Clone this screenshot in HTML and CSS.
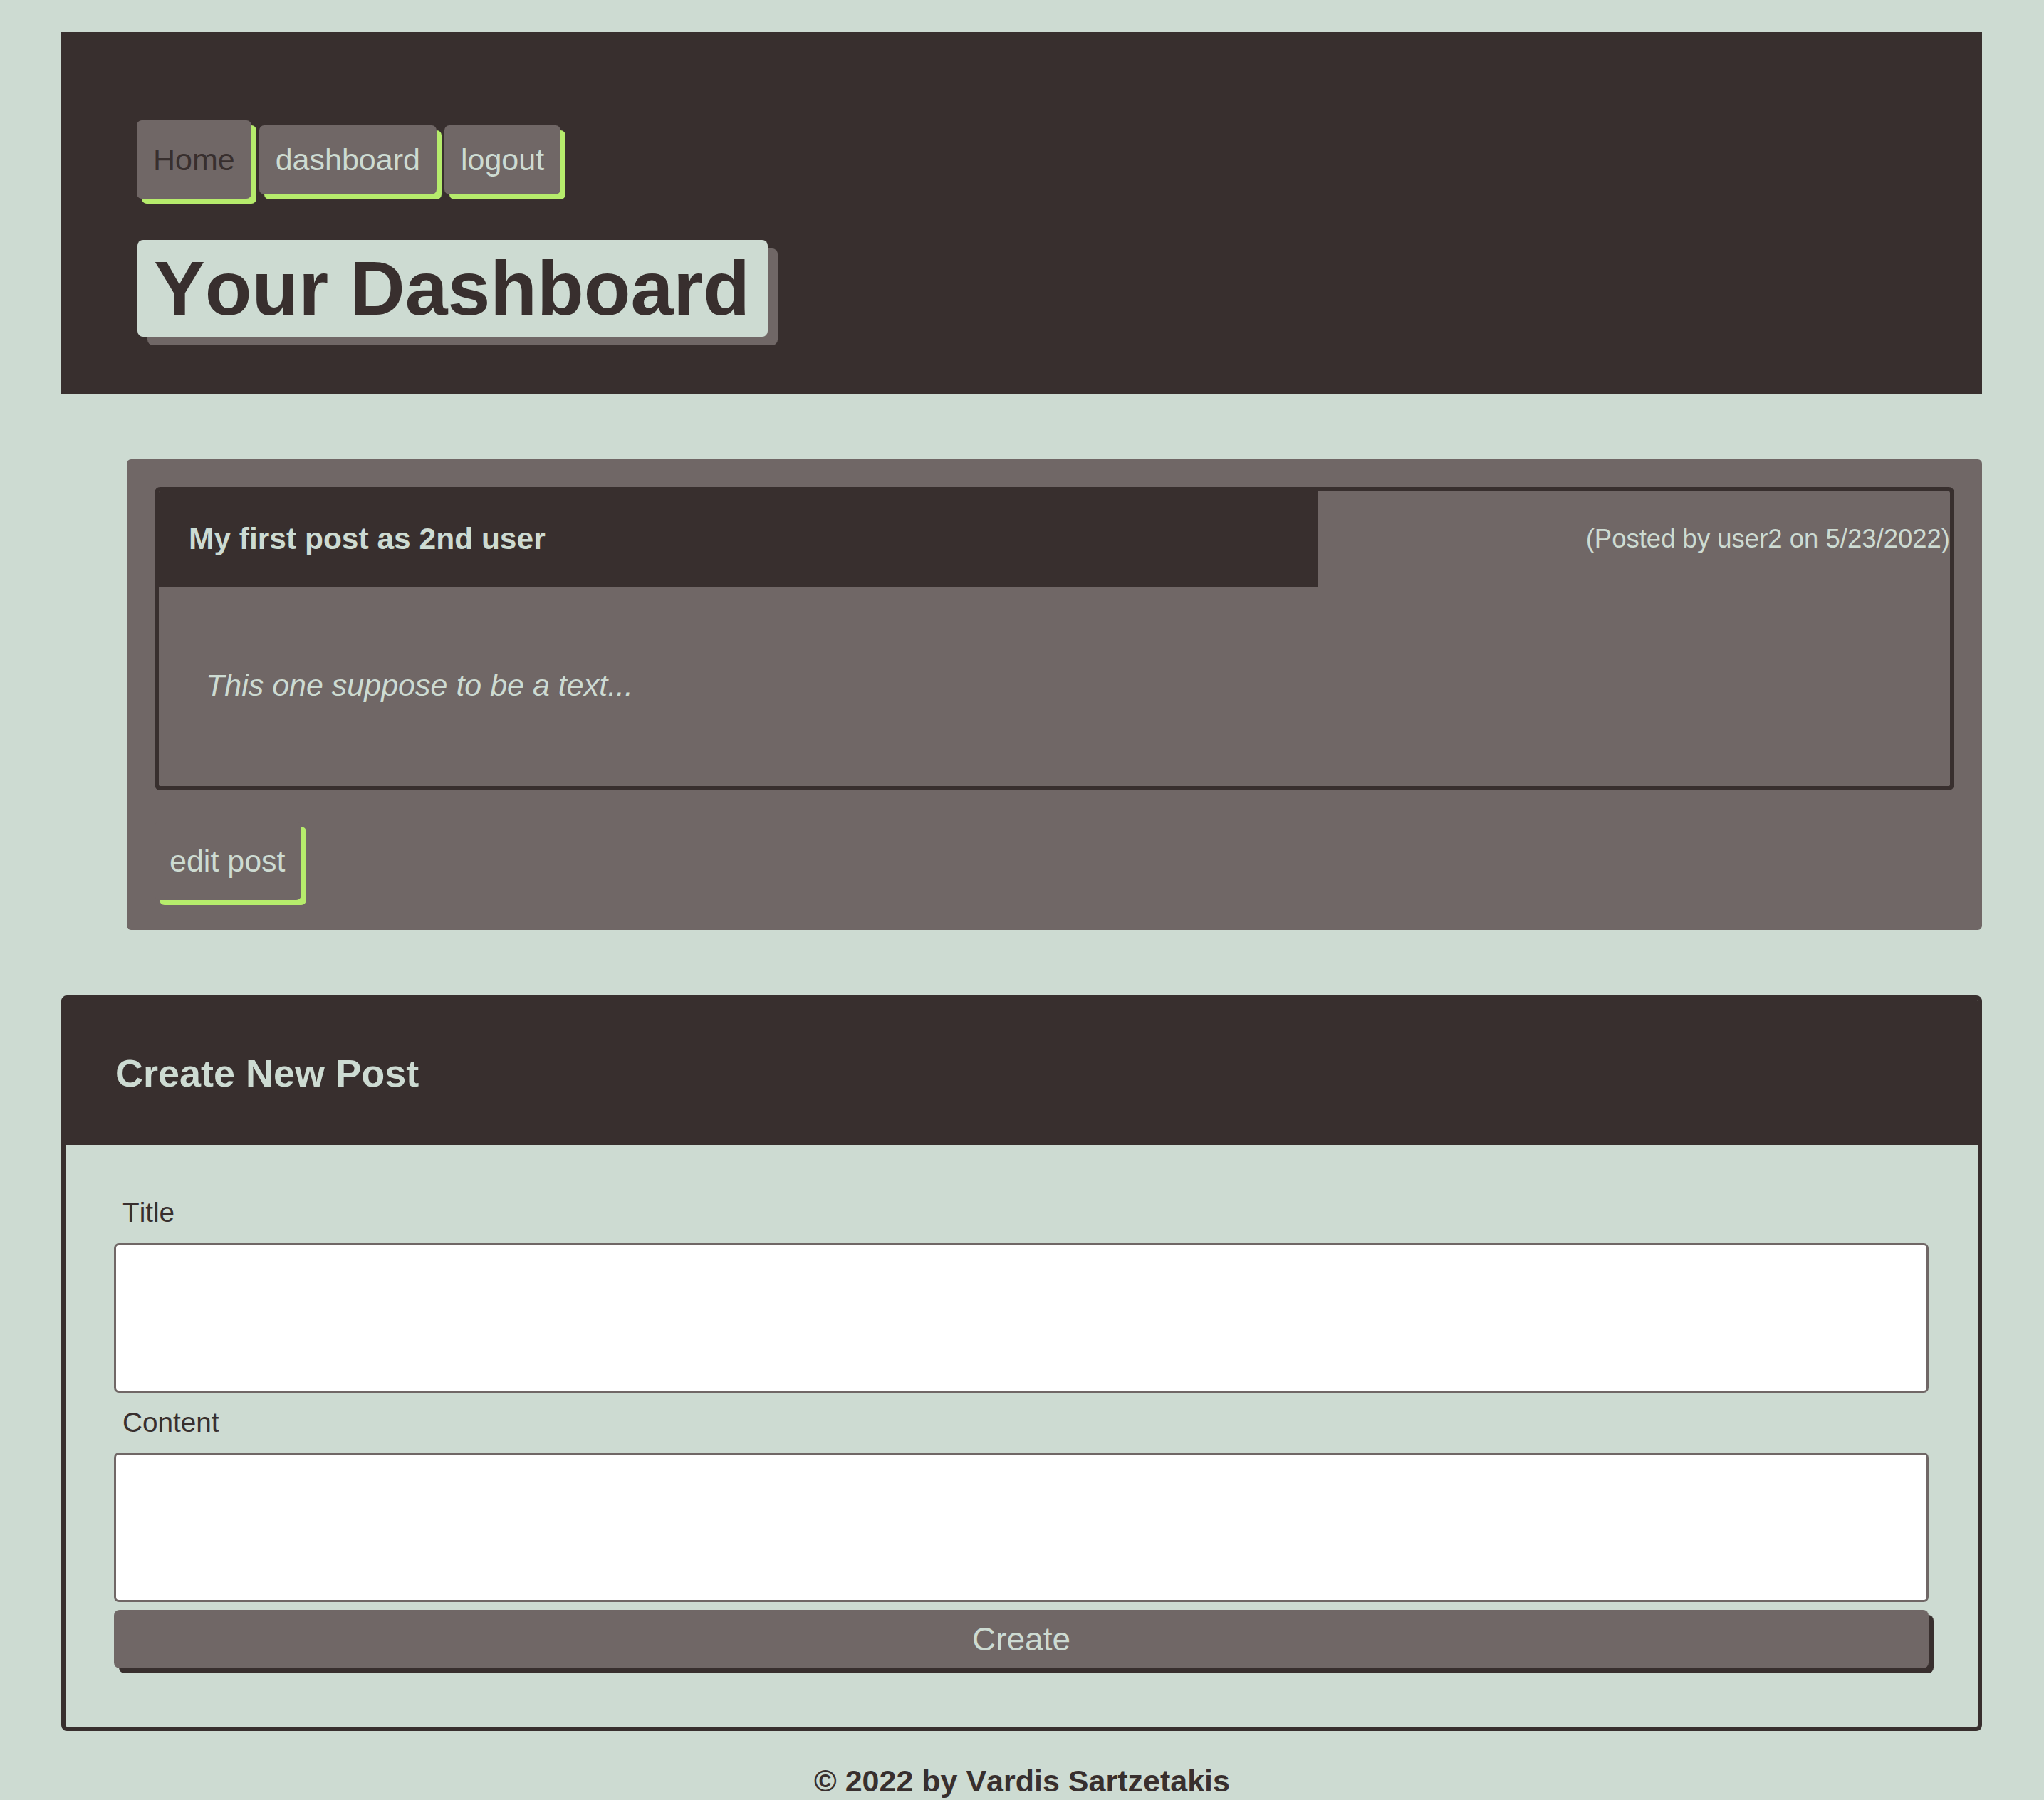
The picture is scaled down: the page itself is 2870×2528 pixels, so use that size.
FILE: index.html
```html
<!DOCTYPE html>
<html lang="en">
<head>
<meta charset="utf-8">
<title>Your Dashboard</title>
<link rel="stylesheet" href="styles.css">
</head>
<body>
<header class="site-header">
  <nav class="nav">
    <a class="nav-link nav-link--active" href="#">Home</a>
    <a class="nav-link" href="#">dashboard</a>
    <a class="nav-link" href="#">logout</a>
  </nav>
  <h1 class="page-title">Your Dashboard</h1>
</header>
<main>
  <section class="posts">
    <article class="post-card">
      <div class="post-head">
        <h2 class="post-title">My first post as 2nd user</h2>
        <span class="post-meta">(Posted by user2 on 5/23/2022)</span>
      </div>
      <p class="post-body">This one suppose to be a text...</p>
    </article>
    <a class="btn-edit" href="#">edit post</a>
  </section>
  <form class="new-post">
    <h2 class="new-post-head">Create New Post</h2>
    <div class="new-post-body">
      <label class="field-label" for="title">Title</label>
      <input class="field-input" id="title" type="text">
      <label class="field-label field-label--gap" for="content">Content</label>
      <textarea class="field-input field-area" id="content"></textarea>
      <button class="btn-create" type="button">Create</button>
    </div>
  </form>
</main>
<footer class="site-footer">© 2022 by Vardis Sartzetakis</footer>
</body>
</html>
```
FILE: styles.css
```css
html, body {
  margin: 0;
  padding: 0;
  background: #cddbd2;
}
body {
  font-family: "Liberation Sans", Arial, sans-serif;
  font-size: 43px;
  line-height: normal;
  font-kerning: none;
  color: #382f2e;
}

.site-header {
  margin: 45px 87px 0 86px;
  background: #382f2e;
  padding: 124px 106px 81px;
  display: flex;
  flex-direction: column;
  align-items: flex-start;
}
.nav {
  display: flex;
  align-items: center;
  gap: 11px;
}
.nav-link {
  display: block;
  background: #706766;
  color: #cddbd2;
  text-decoration: none;
  padding: 24px 23px;
  border-radius: 7px;
  box-shadow: 7px 7px 0 #b6ec6c;
}
.nav-link--active {
  color: #382f2e;
  padding: 30.5px 23px;
}
.page-title {
  margin: 58px 0 0 1px;
  font-size: 107.6px;
  font-weight: bold;
  line-height: normal;
  background: #cddbd2;
  color: #382f2e;
  padding: 6px 25px 6px 23px;
  border-radius: 8px;
  box-shadow: 14px 12px 0 #706766;
}

.posts {
  margin: 91px 87px 0 178px;
  background: #706766;
  border-radius: 6px;
  padding: 39px 39px 42px;
  display: flex;
  flex-direction: column;
  align-items: flex-start;
}
.post-card {
  align-self: stretch;
  border: 6px solid #382f2e;
  border-radius: 8px;
  overflow: hidden;
}
.post-head {
  display: flex;
  align-items: center;
  justify-content: space-between;
}
.post-title {
  box-sizing: border-box;
  width: 64.7%;
  margin: 0;
  padding: 43px 43px 43px 42px;
  background: #382f2e;
  color: #cddbd2;
  font-size: 42.5px;
  font-weight: bold;
  line-height: normal;
}
.post-meta {
  font-size: 36.5px;
  color: #cddbd2;
}
.post-body {
  margin: 0;
  padding: 114px 66px 117px;
  font-style: italic;
  color: #cddbd2;
}
.btn-edit {
  margin-top: 44px;
  display: block;
  background: #706766;
  color: #cddbd2;
  text-decoration: none;
  padding: 30.5px 22px 30.5px 21px;
  border-radius: 7px;
  box-shadow: 7px 7px 0 #b6ec6c;
}

.new-post {
  margin: 92px 87px 0 86px;
  border: 6px solid #382f2e;
  border-radius: 8px;
  overflow: hidden;
}
.new-post-head {
  margin: 0;
  background: #382f2e;
  color: #cddbd2;
  font-size: 54px;
  font-weight: bold;
  line-height: normal;
  padding: 72px 70px 70px;
}
.new-post-body {
  padding: 73px 69px 82px 68px;
  display: flex;
  flex-direction: column;
}
.field-label {
  font-size: 38.7px;
  padding-left: 12px;
  color: #382f2e;
}
.field-label--gap {
  margin-top: 20px;
}
.field-input {
  display: block;
  box-sizing: border-box;
  width: 100%;
  height: 210px;
  margin: 21px 0 0;
  background: #ffffff;
  border: 3px solid #706766;
  border-radius: 7px;
  font: inherit;
}
.field-area {
  height: 210px;
  margin-top: 20px;
  resize: none;
}
.btn-create {
  margin-top: 11px;
  height: 82px;
  width: 100%;
  background: #706766;
  color: #cddbd2;
  border: none;
  border-radius: 8px;
  box-shadow: 7px 7px 0 #382f2e;
  font-family: inherit;
  font-size: 46px;
}

.site-footer {
  margin-top: 46px;
  text-align: center;
  font-weight: bold;
  color: #382f2e;
}
```
